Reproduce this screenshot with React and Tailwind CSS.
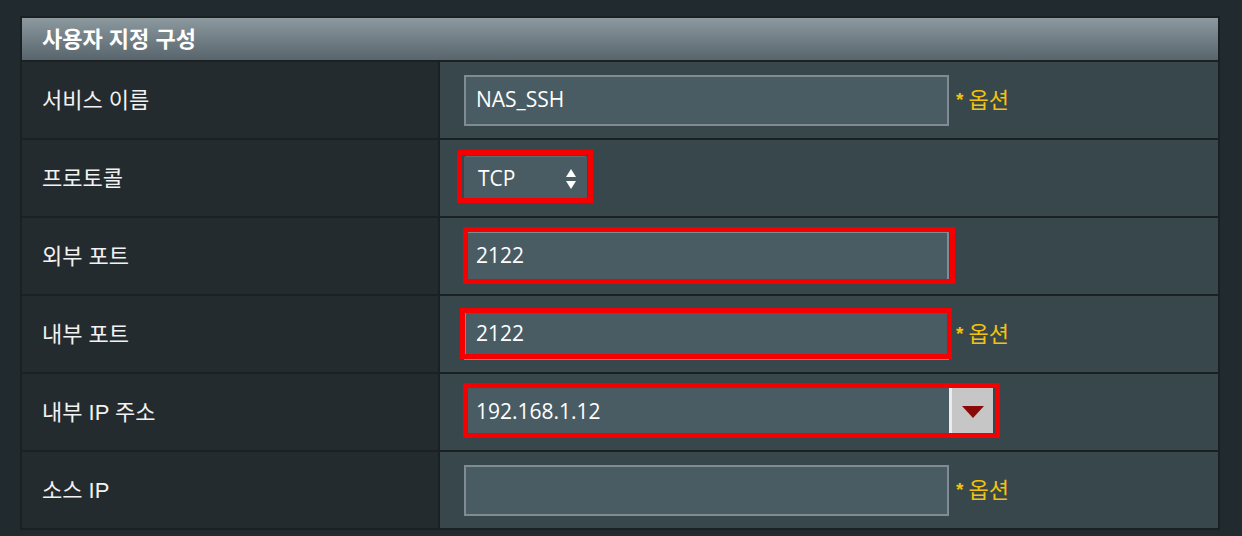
import React from "react";

const labelFont = { fontFamily: '"Liberation Sans", "Noto Sans CJK KR", sans-serif' };
const inputFont = { fontFamily: '"Open Sans", "Noto Sans CJK KR", sans-serif' };

function Row({ label, children }) {
  return (
    <div className="flex h-[78px] border-t-2 border-[#1b2022]">
      <div
        className="w-[418px] shrink-0 border-r-2 border-[#1b2022] bg-[#242b2f] flex items-center pl-[20px] text-[22px] text-[#f2f2f2]"
        style={labelFont}
      >
        {label}
      </div>
      <div className="flex-1 bg-[#37474c] flex items-center pl-[24px]">{children}</div>
    </div>
  );
}

function TextBox({ value }) {
  return (
    <div
      className="w-[485px] h-[51px] border-2 border-[#7f8c91] bg-[#4a5c63] flex items-center pl-[10px] text-[21px] text-white"
      style={inputFont}
    >
      {value}
    </div>
  );
}

function Optional() {
  return (
    <span className="ml-[7px] text-[22px] text-[#f4c20d] flex items-center gap-[5px]" style={labelFont}>
      <span className="text-[19px] font-bold">*</span>
      <span>옵션</span>
    </span>
  );
}

function RedBox({ className }) {
  return <div className={"absolute pointer-events-none border-[5px] border-[#f50000] " + className} />;
}

export default function App() {
  return (
    <div className="w-[1242px] h-[536px] bg-[#212a2e] pt-[16px] pl-[20px]">
      <div className="w-[1200px] border-2 border-[#1b2022]">
        <div
          className="h-[42px] bg-gradient-to-b from-[#8c999f] to-[#58656c] flex items-center pl-[20px] text-[22px] font-bold text-white"
          style={labelFont}
        >
          사용자 지정 구성
        </div>

        <Row label="서비스 이름">
          <TextBox value="NAS_SSH" />
          <Optional />
        </Row>

        <Row label="프로토콜">
          <div className="relative">
            <div
              className="w-[123px] h-[44px] rounded-[3px] bg-[#4a5c63] border-t border-[#5d6e75] flex items-center justify-between pl-[14px] pr-[10px] text-[21px] text-white"
              style={inputFont}
            >
              <span>TCP</span>
              <svg width="12" height="22" viewBox="0 0 12 22">
                <polygon points="6,1 11,9 1,9" fill="#ffffff" />
                <polygon points="1,13 11,13 6,21" fill="#ffffff" />
              </svg>
            </div>
            <RedBox className="left-[-7px] right-[-6px] top-[-6px] bottom-[-3px]" />
          </div>
        </Row>

        <Row label="외부 포트">
          <div className="relative">
            <TextBox value="2122" />
            <RedBox className="left-[-1px] right-[-6px] top-[-4px] bottom-[-2px]" />
          </div>
        </Row>

        <Row label="내부 포트">
          <div className="relative">
            <TextBox value="2122" />
            <RedBox className="left-[-4px] right-[-3px] top-[-1px] bottom-[1px]" />
          </div>
          <Optional />
        </Row>

        <Row label="내부 IP 주소">
          <div className="relative">
            <div className="flex h-[51px]">
              <div
                className="w-[485px] h-[51px] bg-[#4a5c63] flex items-center pl-[12px] text-[21px] text-white"
                style={inputFont}
              >
                192.168.1.12
              </div>
              <div className="w-[44px] h-[51px] bg-[#c6c6c6] border-l-[3px] border-[#ececec] flex items-center justify-center">
                <svg width="22" height="12" viewBox="0 0 22 12">
                  <polygon points="0,0 22,0 11,12" fill="#8a0a0a" />
                </svg>
              </div>
            </div>
            <RedBox className="left-[-1px] right-[-7px] top-[-4px] bottom-[0px]" />
          </div>
        </Row>

        <Row label="소스 IP">
          <TextBox value="" />
          <Optional />
        </Row>
      </div>
    </div>
  );
}
